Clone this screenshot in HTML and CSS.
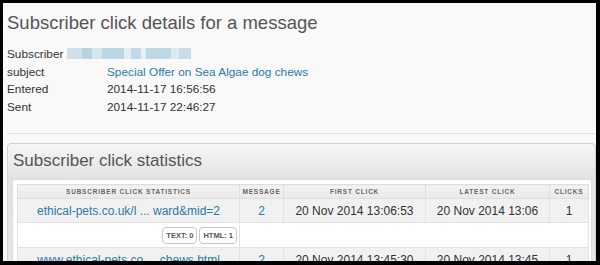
FILE: index.html
```html
<!DOCTYPE html>
<html lang="en">
<head>
    <meta charset="UTF-8">
    <title>Subscriber click details</title>
    <link rel="stylesheet" href="styles.css">
</head>
<body>
    <div class="frame">
        <div class="page">
            <h1>Subscriber click details for a message</h1>
            <table class="details">
                <tr>
                    <td colspan="2">Subscriber <span class="blur"></span></td>
                </tr>
                <tr>
                    <td class="label">subject</td>
                    <td><a href="#">Special Offer on Sea Algae dog chews</a></td>
                </tr>
                <tr>
                    <td class="label">Entered</td>
                    <td>2014-11-17 16:56:56</td>
                </tr>
                <tr>
                    <td class="label">Sent</td>
                    <td>2014-11-17 22:46:27</td>
                </tr>
            </table>
            <div class="rule"></div>

            <div class="panel">
                <h2>Subscriber click statistics</h2>
                <div class="panel-body">
                    <table class="stats">
                        <colgroup>
                            <col style="width: 222px">
                            <col style="width: 44px">
                            <col style="width: 142px">
                            <col style="width: 124px">
                            <col style="width: 39px">
                        </colgroup>
                        <thead>
                            <tr>
                                <th>Subscriber click statistics</th>
                                <th>Message</th>
                                <th>First click</th>
                                <th>Latest click</th>
                                <th>Clicks</th>
                            </tr>
                        </thead>
                        <tbody>
                            <tr class="row">
                                <td><a href="#">ethical-pets.co.uk/l ... ward&amp;mid=2</a></td>
                                <td><a href="#">2</a></td>
                                <td>20 Nov 2014 13:06:53</td>
                                <td>20 Nov 2014 13:06</td>
                                <td>1</td>
                            </tr>
                            <tr class="sub">
                                <td class="badges"><span class="badge">TEXT: 0</span><span class="badge">HTML: 1</span></td>
                                <td colspan="4"></td>
                            </tr>
                            <tr class="row">
                                <td><a href="#">www.ethical-pets.co ... chews.html</a></td>
                                <td><a href="#">2</a></td>
                                <td>20 Nov 2014 13:45:30</td>
                                <td>20 Nov 2014 13:45</td>
                                <td>1</td>
                            </tr>
                        </tbody>
                    </table>
                </div>
            </div>
        </div>
    </div>
</body>
</html>
```

FILE: styles.css
```css
body {
    margin: 0;
    background: #000;
    font-family: "Liberation Sans", Arial, sans-serif;
    color: #333;
}

a {
    color: #2a7aa8;
    text-decoration: none;
}

.frame {
    margin: 3px 4px 0 3px;
    height: 258px;
    overflow: hidden;
    background: #f9f9f9;
}

.page {
    padding-left: 4px;
}

h1 {
    margin: 8px 0 0;
    font-size: 18.5px;
    line-height: 24px;
    font-weight: normal;
    color: #555;
}

.details {
    margin-top: 11px;
    border-collapse: collapse;
    font-size: 11.8px;
    line-height: 17.6px;
}

.details td {
    padding: 0;
}

.details .label {
    width: 100px;
}

.blur {
    display: inline-block;
    width: 124px;
    height: 11px;
    vertical-align: -1px;
    background:
        linear-gradient(90deg, #cfe0ea 0 12%, #b9d3e2 12% 20%, #d6e6ee 20% 28%, #bcd6e4 28% 46%, #e3eef3 46% 52%, #c2d9e6 52% 60%, #e6eff4 60% 64%, #c0d8e5 64% 84%, #dbe9f0 84% 90%, #c9dde8 90% 100%);
}

.rule {
    margin-top: 17px;
    height: 1px;
    background: #e0e0e0;
}

.panel {
    margin-top: 9px;
    border: 1px solid #d2d2d2;
    border-radius: 4px 4px 0 0;
    padding: 0 3px 4px 4px;
    background: linear-gradient(#f6f6f6, #e2e2e2 36px, #e8e8e8);
}

h2 {
    margin: 7px 0 0 1px;
    font-size: 17px;
    line-height: 20px;
    font-weight: normal;
    color: #555;
}

.panel-body {
    margin-top: 8px;
    padding: 4px 3px 4px 4px;
    background: #fff;
    border: 1px solid #dcdcdc;
    border-radius: 3px;
}

.stats {
    width: 571px;
    table-layout: fixed;
    border-collapse: collapse;
    font-size: 12px;
    text-align: center;
}

.stats th {
    height: 13px;
    padding: 0;
    font-size: 6.5px;
    font-weight: bold;
    letter-spacing: 0.8px;
    text-transform: uppercase;
    color: #666;
    background: linear-gradient(#f3f3f3, #e9e9e9);
    border: 1px solid #dedede;
}

.stats td {
    padding: 0;
    border: 1px solid #e2e2e2;
    color: #333;
}

.stats .row td {
    height: 23px;
    background: #f1f1f1;
}

.stats .sub td {
    height: 24px;
    background: #fff;
}

.badges {
    text-align: right;
}

.badge {
    display: inline-block;
    margin-right: 2px;
    padding: 0 3px;
    height: 15px;
    line-height: 15px;
    font-size: 7.5px;
    font-weight: bold;
    color: #555;
    border: 1px solid #c8c8c8;
    border-radius: 4px;
    vertical-align: middle;
}
```
